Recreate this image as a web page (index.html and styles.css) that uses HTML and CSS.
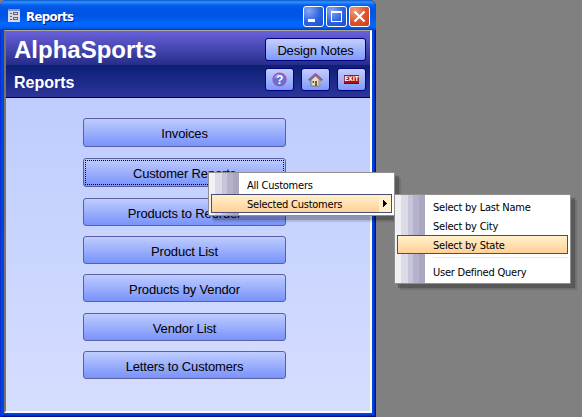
FILE: index.html
```
<!DOCTYPE html>
<html lang="en">
<head>
<meta charset="utf-8">
<title>Reports</title>
<link rel="stylesheet" href="styles.css">
</head>
<body>
<main class="window">
  <header class="titlebar">
    <svg class="form-icon" width="12" height="13" viewBox="0 0 12 13" shape-rendering="crispEdges">
      <path fill="#d8d8e4" d="M0 0h12v13H0z"/><path fill="#8894c8" d="M0 0h12v2H0z"/>
      <path fill="#66667a" d="M2 4h2v1H2zM2 7h2v1H2zM2 10h2v1H2zM5 3h5v1H5zM5 5h5v1H5zM5 8h5v1H5zM5 10h5v1H5zM5 4h1v1H5zM9 4h1v1H9zM5 9h1v1H5zM9 9h1v1H9z"/>
    </svg>
    <span class="caption">Reports</span>
    <div class="controls">
      <span class="control"><svg width="19" height="19"><path fill="#fff" d="M4 12h7v3H4z"/></svg></span>
      <span class="control"><svg width="19" height="19" shape-rendering="crispEdges"><path fill="#fff" fill-rule="evenodd" d="M4 4h11v11H4zM5 6v8h9V6z"/></svg></span>
      <span class="control close"><svg width="19" height="19"><path stroke="#fff" stroke-width="2.2" d="M4.500 4.500l10 10M14.500 4.500l-10 10"/></svg></span>
    </div>
  </header>
  <div class="client">
    <section class="band brand">
      <h1>AlphaSports</h1>
      <button class="tool notes">Design Notes</button>
    </section>
    <section class="band sub">
      <h2>Reports</h2>
      <div class="tools">
        <button class="tool" aria-label="Help"><svg width="15" height="15" viewBox="0 0 15 15"><circle cx="7.500" cy="7.500" r="6.500" fill="#6773d2" stroke="#b445b8" stroke-width="1.200"/><path d="M2.700 6a5 5 0 0 1 4-3.500" stroke="#a9b5f5" fill="none"/><text class="help-mark" x="7.500" y="12">?</text></svg></button>
        <button class="tool" aria-label="Home"><svg width="15" height="14" viewBox="0 0 15 14"><path fill="#e9dfbd" stroke="#777580" d="M3 7l4.500-4L12 7v6H3z"/><path fill="#a7a7b4" d="M10 6l3 2v4l-3 1.500z"/><path d="M1 7.500L7.500 1.500L14 7.500" fill="none" stroke="#777580" stroke-width="2.200"/><path d="M.5 6.500L7.500.5L14.500 6.500" fill="none" stroke="#c33caa"/><path fill="#94501f" d="M7 8h2v5H7z"/><path fill="#555" d="M4.500 8h1.500v2H4.500z"/></svg></button>
        <button class="tool"><span class="exit">EXIT</span></button>
      </div>
    </section>
    <nav class="reports">
      <button class="report tall">Invoices</button>
      <button class="report tall focused">Customer Reports</button>
      <button class="report">Products to Reorder</button>
      <button class="report">Product List</button>
      <button class="report">Products by Vendor</button>
      <button class="report later">Vendor List</button>
      <button class="report">Letters to Customers</button>
    </nav>
  </div>
</main>
<ul class="menu customers">
  <li>All Customers</li>
  <li class="selected">Selected Customers<span class="more"><svg width="5" height="9" shape-rendering="crispEdges"><path d="M0 1h1v1h1v1h1v1h1v1H3v1H2v1H1v1H0z"/></svg></span></li>
</ul>
<ul class="menu select-by">
  <li>Select by Last Name</li>
  <li>Select by City</li>
  <li class="selected">Select by State</li>
  <li class="separator"></li>
  <li>User Defined Query</li>
</ul>
</body>
</html>
```

FILE: styles.css
```
* { box-sizing: border-box; }
body {
  margin: 0;
  height: 417px;
  overflow: hidden;
  background: #808080;
  font-family: "Liberation Sans", Arial, sans-serif;
}
.window {
  width: 376px;
  height: 417px;
  display: flex;
  flex-direction: column;
  padding: 0 4px 4px;
  border-radius: 7px 7px 0 0;
  background: #0044e0;
  box-shadow: inset 1px 0 #0831d9, inset -1px -1px #00138c, inset -2px -2px #0029c0, inset 0 1px #1269ec;
}
.titlebar {
  height: 30px;
  margin: 0 -4px;
  display: flex;
  align-items: center;
  padding: 3px 6px 0 8px;
  border-radius: 7px 7px 0 0;
  background: linear-gradient(#0958c8 0, #3391ff 2px, #0562f0 5px, #0054e3 9px, #0055e5 16px, #0066ff 23px, #0064fa 27px, #0040c4 30px);
}
.form-icon { margin-bottom: 2px; }
.caption {
  flex: 1;
  margin-left: 6px;
  color: #fff;
  font: bold 13px "DejaVu Sans Condensed", "DejaVu Sans", sans-serif;
  font-stretch: condensed;
  letter-spacing: -0.6px;
  text-shadow: 1px 1px #0a1883;
}
.controls { display: flex; gap: 2px; }
.control {
  display: flex;
  width: 21px;
  height: 21px;
  border: 1px solid #fff;
  border-radius: 3px;
  background: radial-gradient(circle at 25% 20%, #86a8f5, #2c62df 55%, #1c4fd0);
}
.control.close { background: radial-gradient(circle at 25% 20%, #ef9b80, #e0512a 55%, #c8401c); }
.client {
  flex: 1;
  border: solid;
  border-width: 1px 2px 2px;
  border-color: #aca899 #fffdf4 #fff #77746c;
  background: linear-gradient(#b9c9fe, #d6defe);
}
.band {
  display: flex;
  justify-content: space-between;
  padding: 0 4px 0 8px;
  color: #fff;
}
.brand { height: 34px; background: linear-gradient(#6961dc, #252d88); }
.sub {
  height: 33px;
  border-bottom: 1px solid #000020;
  background: linear-gradient(#0b1f75, #2d359b);
}
h1, h2 { margin: 0; font-weight: bold; white-space: nowrap; }
h1 { font-size: 24px; line-height: 38px; }
h2 { font-size: 16px; line-height: 35px; }
button {
  display: flex;
  align-items: center;
  justify-content: center;
  padding: 0;
  color: #000;
  font-family: inherit;
  font-size: 13px;
  letter-spacing: -0.15px;
}
.tool {
  width: 29px;
  height: 23px;
  border: 1px solid #000080;
  border-radius: 3px;
  background: linear-gradient(#c4cffd, #7e99fb);
}
.notes { width: 101px; margin-top: 7px; padding-top: 2px; }
.tools { display: flex; gap: 7px; margin-top: 3px; }
.help-mark { font: bold 12px "Liberation Sans", sans-serif; fill: #fff; text-anchor: middle; }
.exit {
  width: 15px;
  height: 9px;
  border-bottom: 1px solid #5f1114;
  background: #a31618;
  color: #fff;
  font: bold 6.500px/8px "DejaVu Sans Condensed", sans-serif;
  font-stretch: condensed;
  letter-spacing: -0.2px;
}
.reports { display: flex; flex-direction: column; padding: 20px 0 0 77px; gap: 10px; }
.report {
  width: 203px;
  height: 28px;
  padding-top: 2px;
  border: 1px solid #5c60a0;
  border-radius: 3px;
  background: linear-gradient(#bfccfe, #7893fb);
}
.report.tall { height: 29px; margin-bottom: 1px; }
.report.later { margin-top: 1px; }
.focused { outline: 1px dotted #000; outline-offset: -3px; }
.menu {
  position: absolute;
  margin: 0;
  padding: 2px;
  border: 1px solid #918f8b;
  list-style: none;
  background: linear-gradient(90deg, #f0f0f5 0 6px, #dcdce8 6px 13px, #c6c5da 13px 18px, #b5b3cb 18px 24px, #aaa7bf 24px 30px, #fff 30px);
  font: 11px "DejaVu Sans Condensed", "DejaVu Sans", sans-serif;
  font-stretch: condensed;
  letter-spacing: -0.23px;
  white-space: nowrap;
  box-shadow: 4px 4px 1px rgb(0 0 0 / 22%), 6px 6px 1px rgb(0 0 0 / 10%);
}
.customers { left: 208px; top: 172px; width: 187px; height: 44px; }
.select-by { left: 394px; top: 194px; width: 177px; height: 90px; }
.menu li {
  height: 19px;
  padding: 0 0 0 35px;
  border: 1px solid transparent;
  line-height: 19px;
}
.menu .selected {
  display: flex;
  justify-content: space-between;
  border-color: #4b4b78;
  background: linear-gradient(#fff1cb, #ffd097);
}
.more {
  display: flex;
  align-items: center;
  width: 12px;
  padding-left: 4px;
  background: #fff0cb;
}
.menu .separator {
  height: 1px;
  margin: 3px 0 4px 36px;
  padding: 0;
  border: 0;
  background: #f2ead8;
}
```
